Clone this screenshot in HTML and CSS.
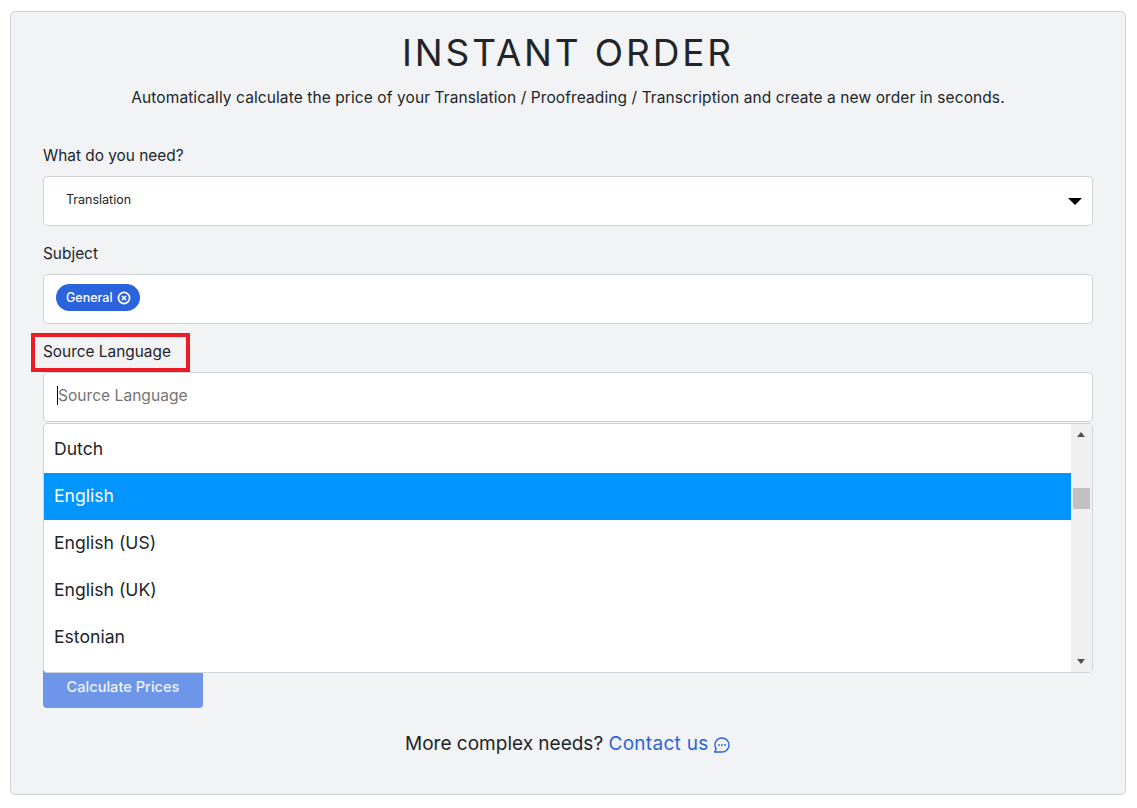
FILE: index.html
```html
<!DOCTYPE html>
<html lang="en">

    <head>
        <meta charset="UTF-8">
        <meta name="viewport" content="width=device-width, initial-scale=1.0">
        <title>Instant Order</title>
        <link rel="stylesheet" href="styles.css">
    </head>

    <body>

        <div class="card">
            <h1 class="title">INSTANT ORDER</h1>
            <p class="sub">Automatically calculate the price of your Translation / Proofreading / Transcription and create a new order in seconds.</p>

            <form class="order">
                <div class="field">
                    <label class="lab">What do you need?</label>
                    <div class="box box-select">
                        <span class="sel-text">Translation</span>
                        <span class="caret"></span>
                    </div>
                </div>

                <div class="field">
                    <label class="lab">Subject</label>
                    <div class="box box-tags">
                        <span class="tag">General
                            <svg class="tag-x" viewBox="0 0 14 14" width="14" height="14">
                                <circle cx="7" cy="7" r="5.6" fill="none" stroke="#fff" stroke-width="1.7"></circle>
                                <path d="M5 5l4 4M9 5l-4 4" fill="none" stroke="#fff" stroke-width="1.7"></path>
                            </svg>
                        </span>
                    </div>
                </div>

                <div class="field field-open">
                    <label class="lab lab-marked">Source Language</label>
                    <div class="box box-search">
                        <span class="cursor"></span>
                        <span class="placeholder">Source Language</span>
                    </div>

                    <div class="drop">
                        <ul class="opts">
                            <li class="opt">Dutch</li>
                            <li class="opt opt-on">English</li>
                            <li class="opt">English (US)</li>
                            <li class="opt">English (UK)</li>
                            <li class="opt">Estonian</li>
                        </ul>
                        <div class="bar">
                            <span class="arrow arrow-up"></span>
                            <span class="thumb"></span>
                            <span class="arrow arrow-down"></span>
                        </div>
                    </div>
                </div>

                <button class="calc" type="button">Calculate Prices</button>
            </form>

            <p class="more">More complex needs? <a class="contact" href="#">Contact us
                <svg class="chat" viewBox="0 0 18 18" width="18" height="18">
                    <path d="M9 1a7 7 0 0 1 0 14H1.5l1.7-3A7 7 0 0 1 9 1z" fill="none" stroke="#2b63dc" stroke-width="1.4" stroke-linejoin="round"></path>
                    <circle cx="6" cy="8" r="0.9" fill="#2b63dc"></circle>
                    <circle cx="9" cy="8" r="0.9" fill="#2b63dc"></circle>
                    <circle cx="12" cy="8" r="0.9" fill="#2b63dc"></circle>
                </svg></a></p>
        </div>

    </body>

</html>
```

FILE: styles.css
```css
:root {
    --ink: #212529;
    --line: #ced4da;
    --blue: #2b63dc;
}

* {
    box-sizing: border-box;
}

body {
    margin: 0;
    padding: 11px 11px 13px 10px;
    background: #fff;
    font-family: 'Inter', 'Liberation Sans', sans-serif;
    color: var(--ink);
}

.card {
    height: 784px;
    padding: 16px 32px 0;
    background: #f2f3f5;
    border: 1px solid #d0d2d5;
    border-radius: 5px;
}

.title {
    margin: 0;
    text-align: center;
    font-family: 'Inter', sans-serif;
    font-size: 37px;
    line-height: 50px;
    font-weight: 400;
    letter-spacing: 2.85px;
}

.sub {
    margin: 8px 0 0;
    text-align: center;
    font-size: 15.5px;
    line-height: 24px;
    letter-spacing: 0.09px;
}

.order {
    margin-top: 34px;
}

.field {
    position: relative;
    margin-bottom: 16px;
}

.lab {
    display: block;
    height: 32px;
    font-size: 15.4px;
    line-height: 24px;
}

.lab-marked::after {
    content: "";
    position: absolute;
    left: -12px;
    top: -7px;
    box-sizing: border-box;
    width: 159px;
    height: 39px;
    border: 4.5px solid #ed1c24;
}

.box {
    display: flex;
    align-items: center;
    height: 50px;
    background: #fff;
    border: 1px solid var(--line);
    border-radius: 4px;
}

.box-select {
    justify-content: space-between;
    padding: 0 10px 4px 22px;
}

.sel-text {
    font-size: 12.5px;
}

.caret {
    width: 0;
    height: 0;
    margin-top: 4px;
    border-left: 7px solid transparent;
    border-right: 7px solid transparent;
    border-top: 7px solid #000;
}

.box-tags {
    padding-left: 12px;
    padding-bottom: 3px;
}

.tag {
    display: flex;
    align-items: center;
    gap: 4px;
    height: 27px;
    padding: 0 9px 0 10px;
    background: var(--blue);
    border-radius: 14px;
    color: #fff;
    font-size: 12.5px;
    font-weight: 500;
}

.box-search {
    padding-left: 13px;
    padding-bottom: 4px;
    font-size: 15.6px;
}

.cursor {
    width: 1px;
    height: 19px;
    background: #000;
}

.placeholder {
    color: #757575;
}

.drop {
    position: absolute;
    left: 0;
    right: 0;
    top: 83px;
    z-index: 2;
    display: flex;
    height: 250px;
    background: #fff;
    border: 1px solid var(--line);
    border-radius: 4px;
}

.opts {
    flex: 1;
    margin: 0;
    padding: 2px 0 0;
    list-style: none;
}

.opt {
    height: 47px;
    padding-left: 10px;
    font-size: 17.6px;
    line-height: 45px;
}

.opt-on {
    background: #0095ff;
    color: #fff;
}

.bar {
    position: relative;
    width: 21px;
    background: #f0f0f0;
}

.arrow {
    position: absolute;
    left: 6px;
    width: 0;
    height: 0;
    border-left: 4.5px solid transparent;
    border-right: 4.5px solid transparent;
}

.arrow-up {
    top: 8px;
    border-bottom: 5px solid #505050;
}

.arrow-down {
    bottom: 8px;
    border-top: 5px solid #505050;
}

.thumb {
    position: absolute;
    left: 2px;
    top: 64px;
    width: 17px;
    height: 21px;
    background: #c1c1c1;
}

.calc {
    display: block;
    width: 160px;
    height: 44px;
    margin-top: 242px;
    padding-bottom: 0;
    border: 0;
    border-radius: 4px;
    background: #6e96e8;
    color: #eef2fc;
    font-family: inherit;
    font-size: 14.6px;
    font-weight: 500;
}

.more {
    margin: 24px 0 0;
    text-align: center;
    font-size: 19px;
    line-height: 24px;
}

.contact {
    color: var(--blue);
    text-decoration: none;
    letter-spacing: 0.3px;
}

.chat {
    margin-left: -1.3px;
    vertical-align: -5px;
}
```
